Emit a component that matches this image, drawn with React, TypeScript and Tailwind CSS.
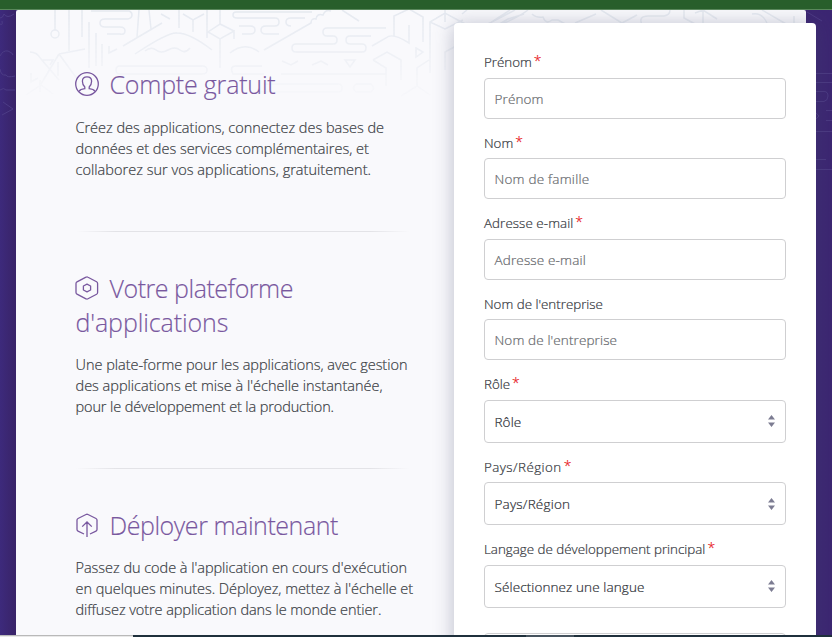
const sans = "font-['Open_Sans','Noto_Sans',sans-serif]";

type Line = { text: string; className: string };

function UserIcon() {
  return (
    <svg className="-ml-[0.5px] inline-block" width="24" height="24" viewBox="0 0 24 24" fill="none" stroke="#79589f" strokeWidth="1.3">
      <circle cx="12" cy="12" r="11.3" />
      <path d="M4 19.3C5 17.8 7.3 17 9.8 16.7V15C7.8 13 7.4 11 7.4 9.2C7.4 6.3 9 4.8 12 4.8S16.6 6.3 16.6 9.2C16.6 11 16.2 13 14.2 15V16.7C16.7 17 19 17.8 20 19.3" />
    </svg>
  );
}

function HexIcon() {
  return (
    <svg className="-ml-[0.5px] inline-block" width="24" height="24" viewBox="0 0 24 24" fill="none" stroke="#79589f" strokeWidth="1.3">
      <path d="M11 1.2Q12 .6 13 1.2L21.6 5.8Q22.6 6.4 22.6 7.5V16.5Q22.6 17.6 21.6 18.2L13 22.8Q12 23.4 11 22.8L2 18.2Q1 17.6 1 16.5V7.5Q1 6.4 2 5.8Z" />
      <path d="M12 8.2L15.6 10V14L12 15.8L8.4 14V10Z" strokeLinejoin="round" />
    </svg>
  );
}

function DeployIcon() {
  return (
    <svg className="-ml-[0.5px] inline-block" width="24" height="24" viewBox="0 0 24 24" fill="none" stroke="#79589f" strokeWidth="1.3">
      <path d="M9 21L3 18.1Q2 17.6 2 16.5V7.1Q2 6 3 5.5L11 1.5Q12 1 13 1.5L21 5.5Q22 6 22 7.1V16.5Q22 17.6 21 18.1L15 21M12 24V9.2M7.2 13.6L12 9L16.8 13.6" />
    </svg>
  );
}

function Pattern() {
  return (
    <svg className="absolute left-0 top-0" width="790" height="95" viewBox="16 10 790 95" fill="none" stroke="#e5e9f0" strokeWidth="1.5">
      <defs>
        <linearGradient id="fade" x1="0" y1="10" x2="0" y2="105" gradientUnits="userSpaceOnUse">
          <stop offset="0" stopColor="#fff" />
          <stop offset=".4" stopColor="#fff" stopOpacity=".6" />
          <stop offset=".7" stopColor="#fff" stopOpacity=".25" />
          <stop offset="1" stopColor="#fff" stopOpacity="0" />
        </linearGradient>
        <mask id="fadeMask" maskUnits="userSpaceOnUse" x="16" y="10" width="790" height="95">
          <rect x="16" y="10" width="790" height="95" fill="url(#fade)" />
        </mask>
      </defs>
      <g mask="url(#fadeMask)">
        <circle cx="55" cy="34" r="4" />
        <path d="M55 10V30M69 10V51M82 10V37M89 22V68M96 33V66M102 44V66M109 46V53L117 49M139 10L137 37M149 10L151 29M161 14L170 19M179 10V28" />
        <path d="M91 11H129Q132 12 132 15T128 19H105Q100 19 100 23T105 27H120Q125 27 125 31T120 34H107" />
        <path d="M123 46L162 23M135 54Q168 32 177 33Q190 33 212 50M145 51Q151 46 156 50T168 50T180 50T190 48" />
        <path d="M183 14L193 20L204 14M193 20V32M207 10V38M220 10V24L208 32L220 39L234 31V39M220 39V68M220 24L234 31" />
        <path d="M30 52Q37 52 41 59L59 80M59 54L41 84M59 54L85 49M59 54L78 80M42 60H53L50 65M58 62V76M31 73V82L38 78M40 80V92M26 95L41 85L53 94" />
        <path d="M120 66H202Q207 66 207 70T202 74H120Q116 74 116 70T120 66" />
        <path d="M312 12H236Q233 12 233 15T237 18H275Q279 18 279 22T275 26H266Q261 26 261 30T266 34H279M239 26H250Q255 26 255 30T250 34H242" />
        <path d="M305 18H291Q286 18 286 22T291 26M264 50L311 23Q311 18 316 19Q317 13 323 15Q325 9 331 11M342 10L359 21" />
        <path d="M386 28H327Q323 28 323 32T327 36H333Q337 36 337 40T333 44H296Q292 44 292 48T296 52H362Q366 52 366 48T362 44H350Q346 44 346 40T350 36H371" />
        <path d="M230 53Q245 41 259 52M282 61L291 65L298 61M312 65L321 61L328 65M345 60H355L350 67ZM386 74H281M264 74H233Q229 66 236 66H262M264 84H338Q342 84 342 88T338 92H260M356 84H371Q376 88 371 92H356Q351 88 356 84" />
        <path d="M394 36V16L409 9L423 17V42M409 25V43Q392 32 386 38L372 46M416 48L423 52L416 57ZM373 60L387 52L401 60V80M373 60L386 68V86M430 73V22L445 13L467 25M430 22L445 29L463 20M445 10V22M429 60L417 68V86M401 96L417 86L430 95M445 70V52L456 46" />
        <path d="M462 14L467 10M475 29H481L510 10M484 26L515 10M496 26L508 19L524 14M502 24Q519 17 528 10M532 14Q536 18 543 17Q546 25 552 20H558L567 25M575 23L596 14M601 10L622 23V33M622 23L637 15M642 25Q638 16 648 16H664Q670 15 670 10M684 10V18L695 24M695 13L703 10L717 19M703 10V30M752 14Q762 12 767 23M762 10L793 28M794 25V16" />
      </g>
    </svg>
  );
}

function SideLines() {
  return (
    <svg className="absolute top-0 left-0" width="16" height="170" viewBox="0 0 16 170" fill="none" stroke="#4c3c86" strokeWidth="1">
      <path d="M0 8Q3 8 4 4Q7 9 14 4M0 14Q3 16 2 11M0 46Q3 40 8 41Q13 43 13 45M0 59Q1 66 6 65Q7 68 15 66M0 80Q4 77 6 80H15M3 92L13 99L2 105" />
    </svg>
  );
}

function RightLines() {
  return (
    <svg className="absolute right-0 top-0" width="26" height="170" viewBox="806 10 26 170" fill="none" stroke="#55468d">
      <path d="M807 12L822 21M816 73.5H832M816 82.5H832M816 91.5H824Q828 91.5 828 96T824 101.5H816M832 110.5H826M816 113L819 116L816 119M832 120.5H826M816 131.5H832M816 159.5H826M816 169.5H832" opacity=".6" />
    </svg>
  );
}

const bodyText = "whitespace-nowrap text-[14.5px] leading-[21px] font-light text-[#3a3d44] [-webkit-text-stroke:0.2px_#3a3d44]";
const headText = "text-[25px] leading-[34px] font-light whitespace-nowrap text-[#79589f] [-webkit-text-stroke:0.15px_#79589f]";

function Lines({ lines }: { lines: Line[] }) {
  return (
    <p className={bodyText}>
      {lines.map((l) => (
        <span key={l.text} className={`block ${l.className}`}>{l.text}</span>
      ))}
    </p>
  );
}

function Divider() {
  return (
    <div className="flex h-px w-[334px]">
      <div className="w-[40px] bg-gradient-to-r from-transparent to-[#e3e3e7]" />
      <div className="grow bg-[#e3e3e7]" />
      <div className="w-[40px] bg-gradient-to-l from-transparent to-[#e3e3e7]" />
    </div>
  );
}

function Star() {
  return <span className="relative -top-px ml-[2px] text-[14px] font-light text-[#e8181d] [-webkit-text-stroke:0.2px_#e8181d]">*</span>;
}

function Label({ text, required, className = "" }: { text: string; required?: boolean; className?: string }) {
  return (
    <div className="h-[39.5px] pt-[14px] text-[13.35px] leading-5 font-light whitespace-nowrap text-[#34373d] [-webkit-text-stroke:0.2px_#34373d]">
      <span className={className}>{text}</span>
      {required && <Star />}
    </div>
  );
}

type ControlProps = { label: string; value: string; required?: boolean; labelClass?: string; valueClass?: string };

function Field({ label, value, required, labelClass, valueClass = "tracking-[0.12px]" }: ControlProps) {
  return (
    <div>
      <Label text={label} required={required} className={labelClass} />
      <div className="flex h-[41px] items-center rounded-[4px] border border-[#cfcfd1] pt-px pl-[9.5px] text-[13.5px] font-light text-[#66686c] [-webkit-text-stroke:0.2px_#66686c]">
        <span className={valueClass}>{value}</span>
      </div>
    </div>
  );
}

function Select({ label, value, required, labelClass, valueClass = "tracking-[0.1px]" }: ControlProps) {
  return (
    <div>
      <Label text={label} required={required} className={labelClass} />
      <div className="flex h-[43px] items-center justify-between rounded-[4px] border border-[#cfcfd1] pt-px pr-[10px] pl-[9.5px] text-[13.5px] font-light text-[#2c2f35] [-webkit-text-stroke:0.2px_#2c2f35]">
        <span className={valueClass}>{value}</span>
        <svg className="mb-px" width="7" height="12" viewBox="0 0 7 12" fill="#7c7c92">
          <path d="M3.5 0L7 4.4H0ZM3.5 12L0 7.6H7Z" />
        </svg>
      </div>
    </div>
  );
}

export default function App() {
  return (
    <div className={`${sans} flex h-[637px] w-[832px] flex-col overflow-hidden`}>
      <header className="h-[10px] shrink-0 border-b border-[#5a875c] bg-[#285e2b]" />
      <main className="relative flex h-[625px] shrink-0 overflow-hidden bg-gradient-to-r from-[#3d2a7c] to-[#3c2672]">
        <SideLines />
        <RightLines />
        <div className="w-4 shrink-0 bg-gradient-to-r from-transparent to-[#37205f]/70" />
        <div className="relative flex h-full w-[790px] shrink-0 rounded-t-[2px] bg-[#f9f9fc]">
          <Pattern />
          <section className="relative w-[438px] shrink-0 pl-[59.5px]">
            <div className="mt-[57px] flex h-[34px] items-center gap-[10.5px]">
              <UserIcon />
              <h2 className={`${headText} tracking-[-0.2px]`}>Compte gratuit</h2>
            </div>
            <div className="mt-[16px]">
              <Lines lines={[
                { text: "Créez des applications, connectez des bases de", className: "tracking-[-0.01px]" },
                { text: "données et des services complémentaires, et", className: "" },
                { text: "collaborez sur vos applications, gratuitement.", className: "tracking-[0.03px]" },
              ]} />
            </div>
            <div className="mt-[51px]"><Divider /></div>
            <div className="mt-[39px]">
              <div className="flex h-[34px] items-center gap-[10.5px]">
                <HexIcon />
                <h2 className={`${headText} tracking-[-0.47px]`}>Votre plateforme</h2>
              </div>
              <h2 className={`${headText} tracking-[-0.1px]`}>d'applications</h2>
            </div>
            <div className="mt-[15px]">
              <Lines lines={[
                { text: "Une plate-forme pour les applications, avec gestion", className: "tracking-[-0.02px]" },
                { text: "des applications et mise à l'échelle instantanée,", className: "" },
                { text: "pour le développement et la production.", className: "tracking-[-0.12px]" },
              ]} />
            </div>
            <div className="mt-[51px]"><Divider /></div>
            <div className="mt-[39px] flex h-[34px] items-center gap-[10.5px]">
              <DeployIcon />
              <h2 className={`${headText} tracking-[-0.45px]`}>Déployer maintenant</h2>
            </div>
            <div className="mt-[15px]">
              <Lines lines={[
                { text: "Passez du code à l'application en cours d'exécution", className: "tracking-[-0.03px]" },
                { text: "en quelques minutes. Déployez, mettez à l'échelle et", className: "tracking-[-0.05px]" },
                { text: "diffusez votre application dans le monde entier.", className: "tracking-[-0.07px]" },
              ]} />
            </div>
          </section>
          <section className="relative mt-[13px] h-[640px] w-[362px] shrink-0 rounded-[4px] bg-white px-[30px] pt-[15.4px] shadow-[0_2px_20px_rgba(70,75,110,0.35)]">
            <Field label="Prénom" value="Prénom" required />
            <Field label="Nom" value="Nom de famille" required valueClass="tracking-[0.22px]" />
            <Field label="Adresse e-mail" value="Adresse e-mail" required labelClass="tracking-[0.08px]" valueClass="tracking-[0.15px]" />
            <Field label="Nom de l'entreprise" value="Nom de l'entreprise" />
            <Select label="Rôle" value="Rôle" required />
            <Select label="Pays/Région" value="Pays/Région" required labelClass="tracking-[0.45px]" valueClass="tracking-[0.2px]" />
            <Select label="Langage de développement principal" value="Sélectionnez une langue" required />
            <div className="mt-[25px] h-[41px] rounded-[4px] border border-[#cfcfd1]" />
          </section>
        </div>
      </main>
      <footer className="flex h-[2px] shrink-0 bg-[#1f303c]">
        <div className="w-[133px] border-t border-[#b9b9b9] bg-[#e9e9e9]" />
        <div className="ml-[393px] w-12 bg-[#46535e]" />
      </footer>
    </div>
  );
}
